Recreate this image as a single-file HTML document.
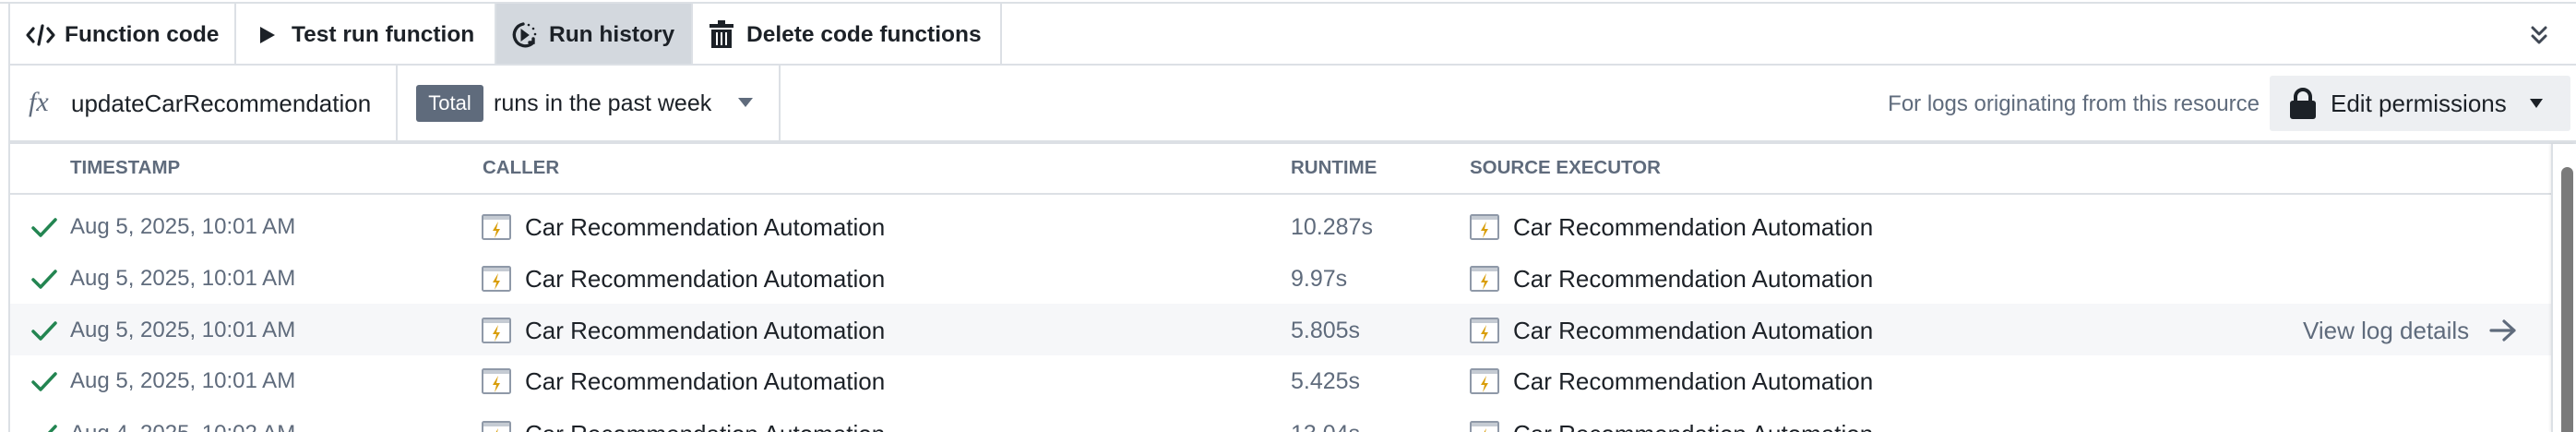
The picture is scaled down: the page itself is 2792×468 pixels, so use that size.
<!DOCTYPE html>
<html><head><meta charset="utf-8"><style>
*{margin:0;padding:0;box-sizing:border-box}
html,body{width:2792px;height:468px;overflow:hidden}
body{background:#fff;font-family:"Liberation Sans",sans-serif;color:#1c2127}
#wrap{position:relative;width:2792px;height:468px;overflow:hidden}
.a{position:absolute;white-space:nowrap}
.hl{position:absolute;background:#dce0e5}
.tab{font-weight:bold;font-size:24.5px;line-height:30px;top:23px}
.th{font-weight:bold;font-size:20.5px;color:#5f6b7c;top:170px;line-height:24px}
.ts{font-size:24px;color:#5f6b7c;line-height:30px}
.nm{font-size:26px;line-height:30px}
.rt{font-size:25px;color:#5f6b7c;line-height:30px}
</style></head><body><div id="wrap">
<div class="hl" style="left:0;top:2px;width:2792px;height:2px"></div>
<div class="hl" style="left:9px;top:2px;width:2px;height:466px"></div>
<div class="hl" style="left:10px;top:69px;width:2782px;height:2px"></div>
<div class="hl" style="left:10px;top:152px;width:2782px;height:4px"></div>
<div class="hl" style="left:10px;top:209px;width:2756px;height:2px"></div>
<div class="a" style="left:537px;top:4px;width:212px;height:65px;background:#d3d8de"></div>
<div class="hl" style="left:254px;top:4px;width:2px;height:65px"></div>
<div class="hl" style="left:536px;top:4px;width:2px;height:65px"></div>
<div class="hl" style="left:749px;top:4px;width:2px;height:65px"></div>
<div class="hl" style="left:1084px;top:4px;width:2px;height:65px"></div>
<svg class="a" style="left:27px;top:25px" width="34" height="26" viewBox="0 0 34 26" fill="none" stroke="#1c2127" stroke-width="3.2" stroke-linecap="round" stroke-linejoin="round"><path d="M9 6 3 13l6 7M25 6l6 7-6 7M19 3l-4 20"/></svg>
<div class="a tab" style="left:70px">Function code</div>
<svg class="a" style="left:281px;top:28px" width="18" height="20"><path d="M1 1 17 10 1 19z" fill="#1c2127"/></svg>
<div class="a tab" style="left:316px">Test run function</div>
<svg class="a" style="left:553px;top:22px" width="34" height="32" viewBox="0 0 34 32" fill="none" stroke="#1c2127" stroke-width="3.4" stroke-linecap="round"><path d="M14 4A12 12 0 1 0 24 25"/><path d="M21 24h4v-4"/><path d="M12 10l8 6-8 6z" fill="#1c2127" stroke-width="1"/><circle cx="20" cy="5" r="1.3" fill="#1c2127" stroke="none"/><circle cx="25" cy="9" r="1.3" fill="#1c2127" stroke="none"/><circle cx="27" cy="15" r="1.3" fill="#1c2127" stroke="none"/></svg>
<div class="a tab" style="left:595px">Run history</div>
<svg class="a" style="left:768px;top:21px" width="28" height="32" viewBox="0 0 28 32"><rect x="1" y="5" width="26" height="4" fill="#1c2127"/><rect x="10" y="1" width="8" height="5" fill="#1c2127"/><path d="M3 11h22v20H3z" fill="#1c2127"/><path d="M9 14v14M14 14v14M19 14v14" stroke="#fff" stroke-width="2"/></svg>
<div class="a tab" style="left:809px">Delete code functions</div>
<svg class="a" style="left:2741px;top:27px" width="22" height="22" viewBox="0 0 22 22" fill="none" stroke="#404854" stroke-width="3" stroke-linecap="round" stroke-linejoin="round"><path d="M4 3l7 7 7-7M4 12l7 7 7-7"/></svg>
<div class="hl" style="left:429px;top:71px;width:2px;height:81px"></div>
<div class="hl" style="left:844px;top:71px;width:2px;height:81px"></div>
<div class="a" style="left:31px;top:94px;font-family:'Liberation Serif',serif;font-style:italic;font-size:30px;color:#5f6b7c;line-height:34px">fx</div>
<div class="a nm" style="left:77px;top:97px">updateCarRecommendation</div>
<div class="a" style="left:451px;top:92px;width:73px;height:40px;background:#5f6b7c;border-radius:3px;color:#fff;font-size:22px;line-height:40px;text-align:center">Total</div>
<div class="a nm" style="left:535px;top:97px;font-size:25px">runs in the past week</div>
<svg class="a" style="left:799px;top:105px" width="18" height="12"><path d="M1 1h16L9 11z" fill="#5f6b7c"/></svg>
<div class="a" style="right:343px;top:98px;font-size:24px;color:#5f6b7c;line-height:30px">For logs originating from this resource</div>
<div class="a" style="left:2460px;top:82px;width:326px;height:60px;background:#edeff2;border-radius:3px"></div>
<svg class="a" style="left:2481px;top:95px" width="30" height="34" viewBox="0 0 30 34"><path d="M7 15V10a8 8 0 0 1 16 0v5" fill="none" stroke="#1c2127" stroke-width="4"/><rect x="1" y="14" width="28" height="20" rx="3" fill="#1c2127"/></svg>
<div class="a nm" style="left:2526px;top:97px">Edit permissions</div>
<svg class="a" style="left:2741px;top:106px" width="16" height="12"><path d="M1 1h14L8 11z" fill="#1c2127"/></svg>
<div class="a th" style="left:76px">TIMESTAMP</div>
<div class="a th" style="left:523px">CALLER</div>
<div class="a th" style="left:1399px">RUNTIME</div>
<div class="a th" style="left:1593px">SOURCE EXECUTOR</div>
<div class="a" style="left:11px;top:329px;width:2755px;height:56px;background:#f6f7f9"></div>
<div id="rows"></div>
<div class="a" style="left:2496px;top:343px;font-size:26px;color:#5f6b7c;line-height:30px">View log details</div>
<svg class="a" style="left:2698px;top:345px" width="30" height="26" viewBox="0 0 30 26" fill="none" stroke="#5f6b7c" stroke-width="3.2" stroke-linecap="round" stroke-linejoin="round"><path d="M2 13h25M16 3l11 10-11 10"/></svg>
<div class="a" style="left:2766px;top:156px;width:26px;height:312px;background:#fff;box-shadow:-2px 0 3px rgba(0,0,0,0.08)"></div>
<div class="hl" style="left:2765px;top:156px;width:2px;height:312px"></div>
<div class="a" style="left:2776px;top:181px;width:13px;height:287px;background:#7a7a7a;border-radius:7px 7px 0 0"></div>
</div>
<script>
var ys=[246,302,358,413,470],ts=["Aug 5, 2025, 10:01 AM","Aug 5, 2025, 10:01 AM","Aug 5, 2025, 10:01 AM","Aug 5, 2025, 10:01 AM","Aug 4, 2025, 10:02 AM"],rt=["10.287s","9.97s","5.805s","5.425s","13.04s"];
var ic=function(x,y){return '<svg class="a" style="left:'+x+'px;top:'+(y-14)+'px" width="32" height="28" viewBox="0 0 32 28"><rect x="1" y="1" width="30" height="26" rx="1.5" fill="#fff" stroke="#8f99a8" stroke-width="2"/><rect x="2" y="2" width="28" height="4" fill="#c5cbd3"/><path d="M18 8l-6 10h4l-2 8 6-10h-4l2-8z" fill="#d99e0b"/></svg>'};
var h='';
for(var i=0;i<5;i++){var y=ys[i];
h+='<svg class="a" style="left:33px;top:'+(y-11)+'px" width="30" height="24" viewBox="0 0 30 24" fill="none" stroke="#238551" stroke-width="3.5" stroke-linecap="round" stroke-linejoin="round"><path d="M3 12l8 8L27 3"/></svg>';
h+='<div class="a ts" style="left:76px;top:'+(y-15)+'px">'+ts[i]+'</div>';
h+=ic(522,y)+'<div class="a nm" style="left:569px;top:'+(y-15)+'px">Car Recommendation Automation</div>';
h+='<div class="a rt" style="left:1399px;top:'+(y-15)+'px">'+rt[i]+'</div>';
h+=ic(1593,y)+'<div class="a nm" style="left:1640px;top:'+(y-15)+'px">Car Recommendation Automation</div>';}
document.getElementById('rows').innerHTML=h;
</script>
</body></html>
